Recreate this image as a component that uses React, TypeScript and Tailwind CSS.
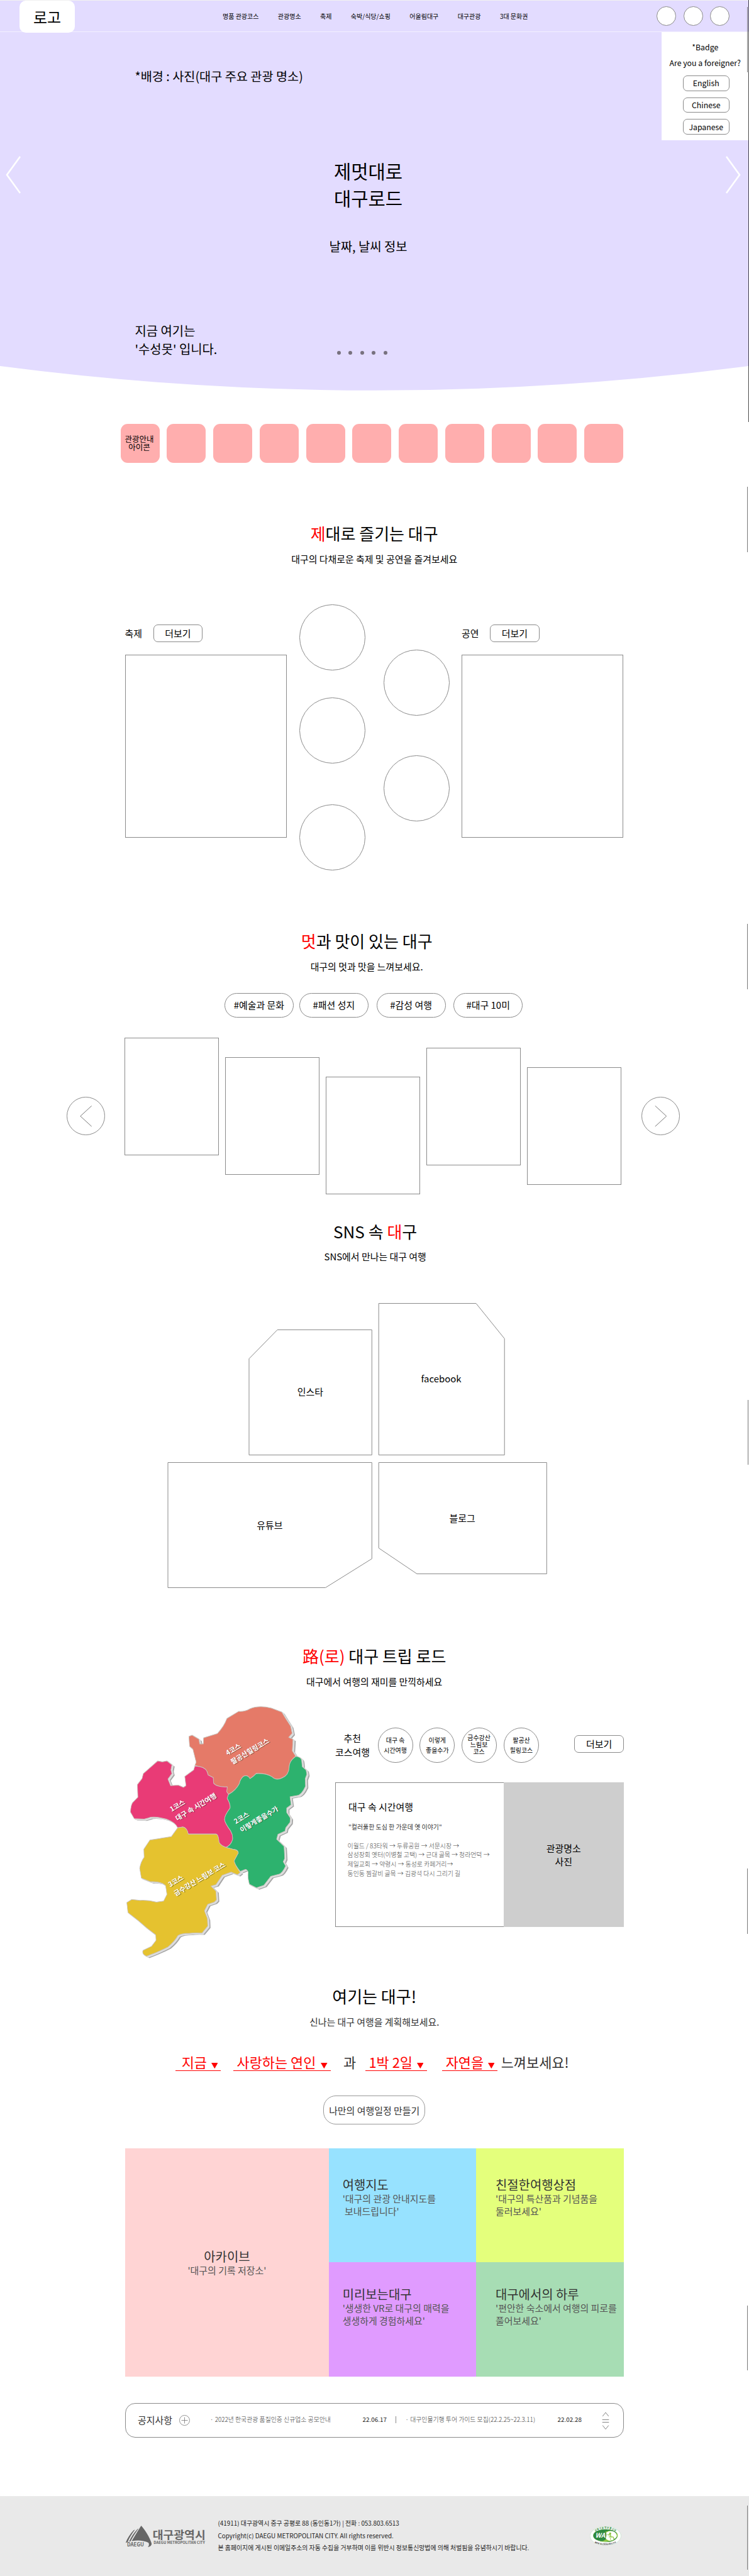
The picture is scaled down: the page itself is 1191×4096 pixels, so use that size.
import React from "react";
import type { ReactNode } from "react";

const NAV = ["명품 관광코스", "관광명소", "축제", "숙박/식당/쇼핑", "어울림대구", "대구관광", "3대 문화권"];

function Header() {
  return (
    <header className="flex h-[51px] border-t border-b-[1.5px] border-t-[#f1f1f1] border-b-[#f3f0ff] pl-[31px] pr-[31px]">
      <div className="relative z-10 -mb-[2px] flex h-[51px] w-[88px] items-center justify-center rounded-[10px] bg-white text-[24px]">
        로고
      </div>
      <nav className="ml-[235px] flex items-center gap-[30.4px] text-[10px]">
        {NAV.map((item) => (
          <a key={item} className="whitespace-nowrap">
            {item}
          </a>
        ))}
      </nav>
      <div className="ml-auto flex items-center gap-[11.5px]">
        {[0, 1, 2].map((i) => (
          <span key={i} className="size-[31px] rounded-full border border-[#8a8a8a] bg-white" />
        ))}
      </div>
    </header>
  );
}

function Chevron({ flip = false, className = "" }: { flip?: boolean; className?: string }) {
  return (
    <svg viewBox="0 0 24 60" className={"h-[60px] w-[24px] " + className} fill="none" stroke="#fff" strokeWidth="2.6">
      <polyline points={flip ? "1,1 22,30 1,59" : "23,1 2,30 23,59"} />
    </svg>
  );
}

function Hero() {
  return (
    <div className="h-[622px]">
      <div className="h-[582px] bg-[#e3dcff]">
        <Header />
        <div className="relative h-[531px]">
          <p className="absolute left-[214.5px] top-[56px] text-[19.7px] leading-[28px]">
            *배경 : 사진(대구 주요 관광 명소)
          </p>
          <aside className="absolute left-[1051.5px] top-0 flex h-[172px] w-[139.5px] flex-col items-center bg-white pt-[14px] text-[12.3px]">
            <p className="leading-[20px]">*Badge</p>
            <p className="mt-[5px] whitespace-nowrap leading-[20px]">Are you a foreigner?</p>
            <div className="mt-[10px] flex flex-col gap-[10px] pl-[3px]">
              {["English", "Chinese", "Japanese"].map((l) => (
                <button key={l} className="flex h-[24.7px] w-[74px] items-center justify-center rounded-[7px] border border-[#8a8a8a]">
                  {l}
                </button>
              ))}
            </div>
          </aside>
          <Chevron className="absolute left-[9px] top-[196.5px]" />
          <Chevron flip className="absolute left-[1154px] top-[196.5px]" />
          <div className="w-[1171px] pt-[198.5px] text-center">
            <h1 className="text-[29.7px] leading-[43.4px]">
              제멋대로
              <br />
              대구로드
            </h1>
            <p className="mt-[42px] text-[19.9px] leading-[28px]">날짜, 날씨 정보</p>
          </div>
          <p className="absolute left-[214.5px] top-[461px] text-[19.9px] leading-[28.8px]">
            지금 여기는
            <br />
            '수성못' 입니다.
          </p>
          <div className="absolute left-[535.5px] top-[506.5px] flex gap-[12.5px]">
            {[0, 1, 2, 3, 4].map((i) => (
              <span key={i} className="size-[6px] rounded-full bg-[#78727f]" />
            ))}
          </div>
        </div>
      </div>
      <svg viewBox="0 0 1191 39" preserveAspectRatio="none" className="block h-[39px] w-full">
        <path d="M0 0 Q595.5 77.6 1191 0Z" fill="#e3dcff" />
      </svg>
    </div>
  );
}

function Shortcuts() {
  return (
    <div className="ml-[191.5px] mt-[51.6px] flex gap-[11.77px]">
      {Array.from({ length: 11 }, (_, i) => (
        <div
          key={i}
          className="flex size-[62px] shrink-0 items-center justify-center rounded-[11px] bg-[#ffaeae] pr-[2px] text-center text-[12.5px] leading-[12.2px]"
        >
          {i === 0 && (
            <span>
              관광안내
              <br />
              아이콘
            </span>
          )}
        </div>
      ))}
    </div>
  );
}

function Heading({ children, sub, className, gray = false }: { children: ReactNode; sub: string; className: string; gray?: boolean }) {
  return (
    <div className={"text-center " + className}>
      <h2 className="text-[26px] leading-[40px]">{children}</h2>
      <p className={"mt-[8.6px] text-[14.95px] leading-[24px] " + (gray ? "text-[#333]" : "")}>{sub}</p>
    </div>
  );
}

function MoreButton() {
  return (
    <button className="flex h-[28px] w-[78.5px] items-center justify-center rounded-[7px] border border-[#8a8a8a] text-[14.95px]">
      더보기
    </button>
  );
}

function EventPanel({ title }: { title: string }) {
  return (
    <div className="w-[257px] shrink-0 pt-[32px]">
      <div className="flex items-center gap-[17.5px]">
        <h3 className="text-[14.95px]">{title}</h3>
        <MoreButton />
      </div>
      <div className="mt-[20px] h-[290.6px] border border-[#8a8a8a]" />
    </div>
  );
}

function Bubble({ className = "" }: { className?: string }) {
  return <span className={"block size-[105px] rounded-full border border-[#8a8a8a] " + className} />;
}

function Events() {
  return (
    <section>
      <Heading className="mt-[92.5px]" sub="대구의 다채로운 축제 및 공연을 즐겨보세요">
        <span className="text-[#f00]">제</span>대로 즐기는 대구
      </Heading>
      <div className="mt-[60.6px] flex h-[422.9px]">
        <EventPanel title="축제" />
        <div className="ml-[20px]">
          <Bubble />
          <Bubble className="mt-[42.6px]" />
          <Bubble className="mt-[65px]" />
        </div>
        <div className="ml-[29px] mr-[19.5px] pt-[71.3px]">
          <Bubble />
          <Bubble className="mt-[63.2px]" />
        </div>
        <EventPanel title="공연" />
      </div>
    </section>
  );
}

function RoundArrow({ flip = false, className = "" }: { flip?: boolean; className?: string }) {
  return (
    <button className={"mt-[93.5px] size-[61.5px] shrink-0 rounded-full border border-[#8a8a8a] " + className}>
      <svg viewBox="0 0 60 60" className="size-full" fill="none" stroke="#777" strokeWidth="1">
        <polyline points={flip ? "21,13.5 39,30 21,46.5" : "39,13.5 21,30 39,46.5"} />
      </svg>
    </button>
  );
}

function Taste() {
  const cards = ["mt-0", "mt-[30.9px]", "mt-[61.7px]", "mt-[15.5px]", "mt-[46.6px]"];
  return (
    <section>
      <Heading className="mt-[92.1px] pr-[24px]" sub="대구의 멋과 맛을 느껴보세요.">
        <span className="text-[#f00]">멋</span>과 맛이 있는 대구
      </Heading>
      <div className="ml-[158.3px] mt-[29.9px] flex text-[14.95px]">
        <span className="flex h-[39.7px] w-[110px] items-center justify-center rounded-full border border-[#8a8a8a]">#예술과 문화</span>
        <span className="ml-[9px] flex h-[39.7px] w-[110px] items-center justify-center rounded-full border border-[#8a8a8a]">#패션 성지</span>
        <span className="ml-[12.7px] flex h-[39.7px] w-[110px] items-center justify-center rounded-full border border-[#8a8a8a]">#감성 여행</span>
        <span className="ml-[12.6px] flex h-[39.7px] w-[110px] items-center justify-center rounded-full border border-[#8a8a8a]">#대구 10미</span>
      </div>
      <div className="-ml-[92.8px] mt-[32px] flex h-[248.7px] w-[976px]">
        <RoundArrow />
        <div className="ml-[31px] mr-[31.5px] flex gap-[10px]">
          {cards.map((c) => (
            <div key={c} className={"h-[187px] w-[150px] border border-[#8a8a8a] " + c} />
          ))}
        </div>
        <RoundArrow flip />
      </div>
    </section>
  );
}

function CutCard({ label, w, h, points, className }: { label: string; w: number; h: number; points: string; className: string }) {
  return (
    <div className={"relative flex items-center justify-center text-[14.95px] " + className}>
      <svg viewBox={`0 0 ${w} ${h}`} className="absolute inset-0 size-full overflow-visible" fill="none" stroke="#8a8a8a">
        <polygon points={points} />
      </svg>
      <span>{label}</span>
    </div>
  );
}

function Sns() {
  return (
    <section>
      <Heading className="mt-[38.4px] pl-[3px]" sub="SNS에서 만나는 대구 여행">
        SNS 속 <span className="text-[#f00]">대</span>구
      </Heading>
      <div className="ml-[197.4px] mt-[61.2px] flex h-[242.3px] items-end gap-[10.6px]">
        <CutCard label="인스타" w={195} h={200} points="0,46.5 45,0.5 195.3,0.5 195.3,199.5 0,199.5" className="h-[200px] w-[195px]" />
        <CutCard label="facebook" w={200} h={242} points="0.2,0.5 155,0.5 200.2,56.5 200.2,241.5 0.2,241.5" className="h-[242px] w-[200px]" />
      </div>
      <div className="ml-[68.4px] mt-[11.3px] flex h-[200px] items-start gap-[10.6px]">
        <CutCard label="유튜브" w={324} h={200} points="0,0.5 324.3,0.5 324.3,153.5 250.5,199.5 0,199.5" className="h-[200px] w-[324px]" />
        <CutCard label="블로그" w={267} h={178} points="0.2,0.5 267.3,0.5 267.3,177.5 61,177.5 0.2,136.5" className="h-[178px] w-[267px]" />
      </div>
    </section>
  );
}

const REGIONS = [
  {
    fill: "#e57a68",
    d: "M436,487 L455,481 497,500 501,521 523,521 525,493 608,474 Q650,440 666,405 L738,372 Q770,375 806,360 Q860,343 935,357 L998,375 1022,405 1052,440 1061,473 1040,491 1066,500 1062,553 1083,578 Q1042,600 1043,630 Q1040,665 1000,677 Q965,690 940,672 Q905,655 843,657 Q825,672 806,680 Q790,660 765,670 Q745,685 742,702 Q720,735 676,752 L665,740 668,718 Q600,720 585,700 L583,675 552,663 Q545,630 500,625 L472,620 480,605 460,545 440,532Z",
  },
  {
    fill: "#e93b76",
    d: "M472,622 L500,625 Q545,630 552,663 L583,675 585,700 Q600,718 668,718 L665,740 676,752 668,770 Q690,800 685,815 Q650,850 652,868 Q655,885 688,918 Q705,940 700,960 Q690,985 660,995 Q625,985 618,970 Q615,935 600,934 L432,934 Q425,905 400,901 L368,905 Q355,880 300,865 Q220,850 190,860 L165,865 105,863 82,833 Q85,800 95,790 L127,765 124,707 152,680 160,657 247,599 275,603 303,599 333,617 327,640 333,657 309,682 325,712 372,710 403,720 418,712 411,670 465,640Z",
  },
  {
    fill: "#2db26e",
    d: "M1083,578 Q1118,580 1119,600 L1122,625 1145,640 1150,660 1140,680 1142,715 Q1115,760 1085,758 L1048,763 1055,800 1028,815 1028,835 1050,860 1048,880 1022,905 1018,920 975,935 967,957 1012,990 1016,1045 1007,1060 1022,1080 Q1000,1115 980,1118 L932,1127 890,1168 845,1180 802,1163 Q790,1130 795,1108 Q785,1090 770,1098 L747,1105 Q710,1070 710,1055 L735,1020 Q735,1005 700,1003 L660,995 Q690,985 700,960 Q705,940 688,918 Q655,885 652,868 Q650,850 685,815 Q690,800 668,770 L676,752 Q720,735 742,702 Q745,685 765,670 Q790,660 806,680 Q825,672 843,657 Q905,655 940,672 Q965,690 1000,677 Q1040,665 1043,630 Q1042,600 1083,578Z",
  },
  {
    fill: "#e5c22f",
    d: "M368,905 L400,901 Q425,905 432,934 L600,934 Q615,935 618,970 Q625,985 660,995 L700,1003 Q735,1005 735,1020 L710,1055 Q710,1070 747,1110 L730,1120 692,1108 637,1123 600,1165 570,1172 600,1195 603,1235 590,1245 550,1255 530,1285 548,1320 550,1355 515,1387 Q470,1385 440,1388 Q390,1388 370,1398 Q350,1425 310,1450 Q260,1470 180,1493 Q150,1485 158,1466 L210,1447 237,1420 235,1395 Q180,1365 130,1330 L67,1293 60,1247 90,1233 140,1237 Q190,1235 240,1245 L283,1240 303,1210 295,1170 Q270,1150 205,1152 L148,1135 138,1090 Q145,1060 165,1040 L163,1003 200,961 330,945Z",
  },
];

const MAP_LABELS: [number, number, string][] = [
  [163, 81.6, "4코스"],
  [171, 95.5, "팔공산힐링코스"],
  [74, 171, "1코스"],
  [83, 185.5, "대구 속 시간여행"],
  [176, 190.4, "2코스"],
  [185.5, 204, "이렇게좋을수가"],
  [71.5, 290.8, "3코스"],
  [80.5, 305, "금수강산 느림보 코스"],
];

function CourseMap() {
  return (
    <svg viewBox="0 0 297 407" className="h-[407px] w-[297px] shrink-0 overflow-visible">
      <g transform="scale(0.26265 0.34745) translate(-50 -340)" strokeLinejoin="round">
        <g transform="translate(17 8)" fill="#a6a6a6">
          {REGIONS.map((r) => (
            <path key={r.fill} d={r.d} />
          ))}
        </g>
        <g transform="translate(8 4)" fill="#dedede" stroke="#dedede" strokeWidth="5">
          {REGIONS.map((r) => (
            <path key={r.fill} d={r.d} />
          ))}
        </g>
        {REGIONS.map((r) => (
          <path key={r.fill} d={r.d} fill={r.fill} stroke="#c9c3bd" strokeWidth="3" />
        ))}
      </g>
      <g fontSize="10.7" fontWeight="700">
        {MAP_LABELS.map(([x, y, t]) => (
          <g key={t} transform={`translate(${x} ${y}) rotate(-31)`}>
            <text x="0.8" y="1" fill="#000" opacity="0.4">
              {t}
            </text>
            <text fill="#fff">{t}</text>
          </g>
        ))}
      </g>
    </svg>
  );
}

function CourseCircle({ lines, className = "" }: { lines: string[]; className?: string }) {
  return (
    <div
      className={
        "flex size-[56px] shrink-0 flex-col items-center justify-center rounded-full border border-[#8a8a8a] text-[9.95px] " +
        (lines.length > 2 ? "leading-[10.9px] " : "leading-[15.3px] ") +
        className
      }
    >
      {lines.map((l) => (
        <span key={l} className="whitespace-nowrap">
          {l}
        </span>
      ))}
    </div>
  );
}

function TripRoad() {
  return (
    <section>
      <Heading className="mt-[88.1px]" sub="대구에서 여행의 재미를 만끽하세요">
        <span className="text-[#f00]">路(로)</span> 대구 트립 로드
      </Heading>
      <div className="mt-[24px] flex h-[406.5px]">
        <CourseMap />
        <div className="ml-[37.5px] w-[458.7px] shrink-0 pt-[37px]">
          <div className="flex items-center">
            <p className="w-[54.5px] whitespace-nowrap text-center text-[14.95px] leading-[21.6px]">
              추천
              <br />
              코스여행
            </p>
            <CourseCircle className="ml-[13px]" lines={["대구 속", "시간여행"]} />
            <CourseCircle className="ml-[10.7px]" lines={["이렇게", "좋을수가"]} />
            <CourseCircle className="ml-[10.3px]" lines={["금수강산", "느림보", "코스"]} />
            <CourseCircle className="ml-[11.4px]" lines={["팔공산", "힐링코스"]} />
            <div className="ml-auto pb-[3px]">
              <MoreButton />
            </div>
          </div>
          <div className="mt-[31px] flex h-[230.7px]">
            <div className="w-[267.7px] border border-r-0 border-[#8a8a8a] pl-[20px] pt-[26px]">
              <h3 className="text-[14.95px] leading-[24px]">대구 속 시간여행</h3>
              <p className="mt-[12px] text-[9.95px] leading-[16px] text-[#333]">"컬러풀한 도심 한 가운데 옛 이야기"</p>
              <p className="-ml-[1.5px] mt-[15px] whitespace-nowrap text-[9.9px] font-light leading-[14.8px] text-[#444]">
                이월드 / 83타워 → 두류공원 → 서문시장 →
                <br />
                삼성장회 옛터(이병철 고택) → 근대 골목 → 청라언덕 →
                <br />
                제일교회 → 약령시 → 동성로 카페거리→
                <br />
                동인동 찜갈비 골목 → 김광석 다시 그리기 길
              </p>
            </div>
            <div className="flex flex-1 items-center justify-center bg-[#cecece] text-center text-[14.95px] leading-[21px]">
              <span>
                관광명소
                <br />
                사진
              </span>
            </div>
          </div>
        </div>
      </div>
    </section>
  );
}

function Pick({ children, className }: { children: string; className: string }) {
  return (
    <span className={"flex h-[26.7px] border-b-[1.6px] border-[#f00] leading-[25px] text-[#f00] " + className}>
      <span className="whitespace-nowrap">{children}</span>
      <svg viewBox="0 0 10.6 9.2" className="ml-auto mt-[14px] h-[9.2px] w-[10.6px] shrink-0" fill="#f00">
        <path d="M0 0H10.6L5.3 9.2Z" />
      </svg>
    </span>
  );
}

function Planner() {
  return (
    <section>
      <Heading className="mt-[38.1px]" sub="신나는 대구 여행을 계획해보세요." gray>
        여기는 대구!
      </Heading>
      <div className="ml-[80.6px] mt-[39.4px] flex text-[21.9px] leading-[25px] text-[#333]">
        <Pick className="w-[72.1px] pl-[9.5px] pr-[5px]">지금</Pick>
        <Pick className="ml-[19.8px] w-[154.8px] pl-[5.5px] pr-[5px]">사랑하는 연인</Pick>
        <span className="ml-[20.2px] w-[35.4px]">과</span>
        <Pick className="w-[97.5px] pl-[5px] pr-[5.5px]">1박 2일</Pick>
        <Pick className="ml-[24.2px] w-[88.1px] pl-[5.5px] pr-[5px]">자연을</Pick>
        <span className="ml-[5.5px] whitespace-nowrap">느껴보세요!</span>
      </div>
      <button className="mx-auto mt-[39.3px] flex h-[45.4px] w-[162px] items-center justify-center rounded-[20px] border border-[#999] pt-[2px] text-[14.95px] text-[#333]">
        나만의 여행일정 만들기
      </button>
    </section>
  );
}

function Tile({ title, lines, className }: { title: string; lines: string[]; className: string }) {
  return (
    <div className={className}>
      <h3 className="text-[19.9px] leading-[24px] text-[#333]">{title}</h3>
      {lines.map((l) => (
        <p key={l} className="whitespace-pre text-[14.95px] leading-[19.8px] text-[#555]">
          {l}
        </p>
      ))}
    </div>
  );
}

function Tiles() {
  return (
    <section className="mt-[38.7px] grid h-[362.5px] grid-cols-[324.6px_234.3px_234.3px] grid-rows-2">
      <Tile
        title="아카이브"
        lines={["'대구의 기록 저장소'"]}
        className="row-span-2 bg-[#ffd4d4] pt-[160px] text-center"
      />
      <Tile title="여행지도" lines={["'대구의 관광 안내지도를", " 보내드립니다'"]} className="bg-[#97e2ff] pl-[21.5px] pt-[46px]" />
      <Tile title="친절한여행상점" lines={["'대구의 특산품과 기념품을", "둘러보세요'"]} className="bg-[#e4ff7c] pl-[30.5px] pt-[46px]" />
      <Tile title="미리보는대구" lines={["'생생한 VR로 대구의 매력을", "생생하게 경험하세요'"]} className="bg-[#e09bff] pl-[21.5px] pt-[38.5px]" />
      <Tile title="대구에서의 하루" lines={["'편안한 숙소에서 여행의 피로를", "풀어보세요'"]} className="bg-[#a7ddb4] pl-[30.5px] pt-[38.5px]" />
    </section>
  );
}

function Notice() {
  return (
    <section className="mt-[42.6px] flex h-[54.6px] items-center whitespace-nowrap rounded-[16px] border border-[#8a8a8a] pl-[19.5px] text-[9.9px]">
      <h3 className="w-[66px] text-[14.95px] text-[#333]">공지사항</h3>
      <svg viewBox="0 0 17 17" className="size-[17px]" fill="none" stroke="#777" strokeWidth="0.8">
        <circle cx="8.5" cy="8.5" r="8" />
        <path d="M3.5 8.5H13.5M8.5 3.5V13.5" />
      </svg>
      <span className="ml-[32px] w-[242.5px] pb-[3px] font-light text-[#333]">· 2022년 한국관광 품질인증 신규업소 공모안내</span>
      <span className="w-[52px] pb-[3px] text-[#222]">22.06.17</span>
      <span className="mb-[3px] h-[11px] w-px bg-[#888]" />
      <span className="ml-[15px] w-[242px] pb-[3px] font-light text-[#333]">· 대구인물기행 투어 가이드 모집(22.2.25~22.3.11)</span>
      <span className="pb-[3px] text-[#222]">22.02.28</span>
      <svg viewBox="0 0 12 28" className="ml-auto mr-[21.5px] h-[28px] w-[12px]" fill="none" stroke="#777" strokeWidth="0.9">
        <path d="M1.2 7 L6 1 L10.8 7M0.7 12.5H11.3M0.7 16.5H11.3M1.2 21.5 L6 27.5 L10.8 21.5" />
      </svg>
    </section>
  );
}

function CityLogo() {
  return (
    <svg viewBox="0 0 132 40" className="h-[40px] w-[132px] overflow-visible" fill="#666">
      <path d="M25.5 1 C31 7 39 19 42 29 C42.6 32 40 34.5 36 35 C38 33 38.5 30.5 37 28 C30 24.5 20 23.5 10.5 25.5 C15 18 21 8 25.5 1Z" />
      <path d="M19.5 6.5 L21.3 5.5 C16 13 11.5 20 8.7 25.8 L6.2 26.3 C9.5 19 14 12 19.5 6.5Z" />
      <path d="M13.5 8.3 L15.7 7.3 C11 13.5 6.5 20.5 4 27 L0.8 28.3 C3.5 21 8 14 13.5 8.3Z" />
      <text x="3" y="34.2" fontSize="8.6" fontWeight="700" textLength="27" lengthAdjust="spacingAndGlyphs">
        DAEGU
      </text>
      <text x="43.7" y="21.6" fontSize="17.4" fontWeight="700" textLength="84" lengthAdjust="spacingAndGlyphs">
        대구광역시
      </text>
      <text x="45.3" y="30" fontSize="6.6" fontWeight="700" textLength="81.5" lengthAdjust="spacingAndGlyphs">
        DAEGU METROPOLITAN CITY
      </text>
    </svg>
  );
}

function AccessibilityMark() {
  return (
    <svg viewBox="0 0 224 138" className="h-[30.6px] w-[49.7px]">
      <defs>
        <path id="wa-top" d="M38,40 Q112,-8 188,40" />
        <path id="wa-bottom" d="M34,118 Q112,150 196,116" />
      </defs>
      <ellipse cx="112" cy="69" rx="111" ry="68" fill="#fff" stroke="#b9dfc2" strokeWidth="2.5" />
      <ellipse cx="112" cy="66" rx="88" ry="45" fill="#8cc63f" />
      <path d="M24 66 C24 40 64 21 112 21 C155 21 190 36 198 58 C180 38 150 30 128 34 C100 38 98 60 112 68 C126 78 118 100 90 106 C52 104 24 90 24 66Z" fill="#2f8a40" />
      <ellipse cx="150" cy="69" rx="43" ry="35" fill="#fff" />
      <path d="M88 38 C112 32 122 50 118 66 C116 90 100 104 80 100Z" fill="#2f8a40" />
      <path d="M66 108 C120 122 180 104 196 68 C192 104 140 126 66 108Z" fill="#2f8a40" />
      <text x="38" y="82" fontSize="45" fontWeight="700" fontStyle="italic" fill="#fff" textLength="72" lengthAdjust="spacingAndGlyphs">
        WA
      </text>
      <g fill="none" stroke="#8cc63f" strokeWidth="6" strokeLinecap="round">
        <circle cx="145" cy="52" r="5" fill="#8cc63f" />
        <path d="M146 60 L152 76 L166 76 L174 92M128 60 L148 64M138 76 L150 74" />
        <path d="M150 80 A14 14 0 1 0 174 88" strokeWidth="4" />
      </g>
      <text fontSize="17" fontWeight="700" fill="#2f8a40">
        <textPath href="#wa-top" textLength="156">
          과학기술정보통신부
        </textPath>
      </text>
      <text fontSize="15" fontWeight="700" fill="#222">
        <textPath href="#wa-bottom" textLength="158">
          WEB ACCESSIBILITY
        </textPath>
      </text>
    </svg>
  );
}

function Footer() {
  return (
    <footer className="mt-[93.1px] flex h-[127.2px] bg-[#e9e9e9] pl-[198.5px] text-[9.9px] leading-[19.6px] text-[#222]">
      <div className="pt-[45.5px]">
        <CityLogo />
      </div>
      <div className="ml-[16px] w-[591.5px] whitespace-nowrap pt-[34px]">
        <p>(41911) 대구광역시 중구 공평로 88 (동인동1가) | 전화 : 053.803.6513</p>
        <p>Copyright(c) DAEGU METROPOLITAN CITY. All rights reserved.</p>
        <p>본 홈페이지에 게시된 이메일주소의 자동 수집을 거부하며 이를 위반시 정보통신망법에 의해 처벌됨을 유념하시기 바랍니다.</p>
      </div>
      <div className="pt-[47.5px]">
        <AccessibilityMark />
      </div>
    </footer>
  );
}

function EdgeMarks() {
  return (
    <div className="pointer-events-none">
      <span className="absolute right-0 top-0 h-[671px] w-px bg-black/70" />
      <span className="absolute left-[1188px] top-[11px] h-[104px] w-px bg-[#777]" />
      <span className="absolute left-[1188px] top-[774px] h-[104px] w-px bg-[#777]" />
      <span className="absolute left-[1188px] top-[1469px] h-[104px] w-px bg-[#777]" />
      <span className="absolute left-[1189px] top-[2226px] h-[103px] w-px bg-[#777]" />
      <span className="absolute left-[1188px] top-[2971px] h-[104px] w-px bg-[#777]" />
      <span className="absolute left-[1188px] top-[3666px] h-[103px] w-px bg-[#777]" />
      <span className="absolute left-[1188px] top-[3984px] h-[102px] w-px bg-[#777]" />
    </div>
  );
}

export default function App() {
  return (
    <div className="relative h-[4096px] w-[1191px] overflow-hidden bg-white font-['Noto_Sans_CJK_KR','Noto_Sans',sans-serif] text-black">
      <Hero />
      <Shortcuts />
      <main className="ml-[198.6px] w-[793.2px]">
        <Events />
        <Taste />
        <Sns />
        <TripRoad />
        <Planner />
        <Tiles />
        <Notice />
      </main>
      <Footer />
      <EdgeMarks />
    </div>
  );
}
